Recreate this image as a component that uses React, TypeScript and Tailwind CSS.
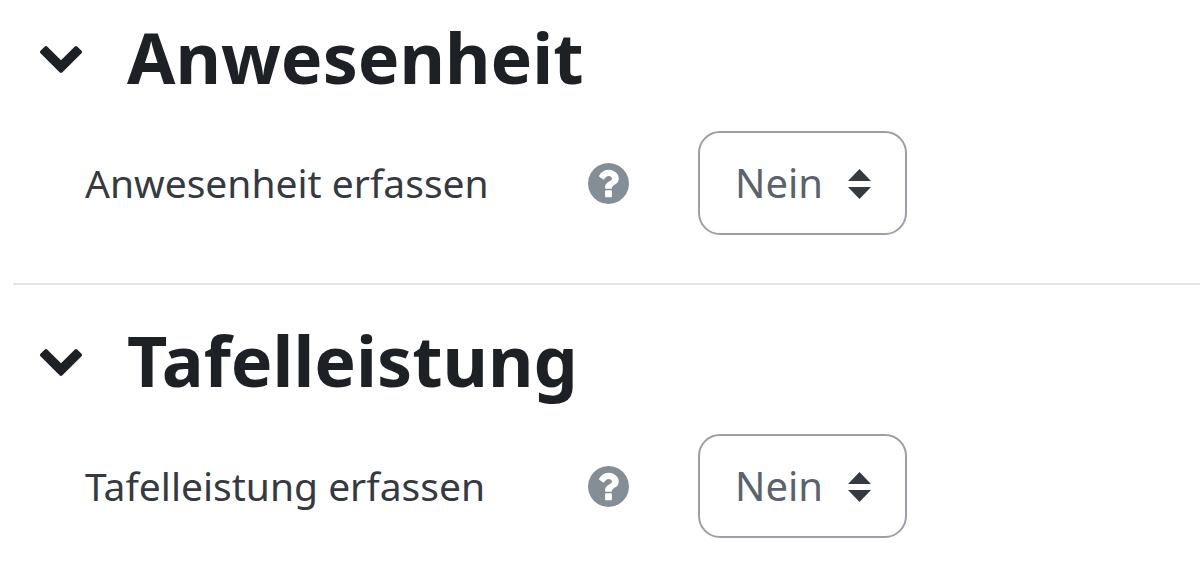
import { useState } from 'react'

interface SectionProps {
  id: string
  title: string
  label: string
}

function ChevronIcon() {
  return (
    <svg viewBox="90 532 1612 1036" className="h-[27px] w-[42px]" fill="currentColor" aria-hidden="true">
      <path d="M1683 808l-742 741q-19 19-45 19t-45-19l-742-741q-19-19-19-45.5t19-45.5l166-165q19-19 45-19t45 19l531 531 531-531q19-19 45-19t45 19l166 165q19 19 19 45.5t-19 45.5z" />
    </svg>
  )
}

function HelpIcon() {
  return (
    <svg viewBox="128 128 1536 1536" className="size-[41px]" fill="currentColor" aria-hidden="true">
      <path d="M1024 1376v-192q0-14-9-23t-23-9h-192q-14 0-23 9t-9 23v192q0 14 9 23t23 9h192q14 0 23-9t9-23zm256-672q0-88-55.5-163t-138.5-116-170-41q-243 0-371 213-15 24 8 42l132 100q7 6 19 6 16 0 25-12 53-68 86-92 34-24 86-24 48 0 85.5 26t37.5 59q0 38-20 61t-68 45q-63 28-115.5 86.5t-52.5 125.5v36q0 14 9 23t23 9h192q14 0 23-9t9-23q0-19 21.5-49.5t54.5-49.5q32-18 49-28.5t46-35 44.5-48 28-60.5 12.5-81zm384 192q0 209-103 385.5t-279.5 279.5-385.5 103-385.5-103-279.5-279.5-103-385.5 103-385.5 279.5-279.5 385.5-103 385.5 103 279.5 279.5 103 385.5z" />
    </svg>
  )
}

function Section({ id, title, label }: SectionProps) {
  const [open, setOpen] = useState(true)
  const [value, setValue] = useState('0')

  return (
    <section className="pl-[27px]">
      <div className="flex items-center gap-[45px]">
        <button
          type="button"
          aria-label={title}
          aria-expanded={open}
          onClick={() => setOpen((prev) => !prev)}
          className="text-[#1d2125]"
        >
          <ChevronIcon />
        </button>
        <h3 className="pb-1 text-[70px] leading-[88px] font-bold text-[#1d2125]">{title}</h3>
      </div>

      {open && (
        <div className="mt-[26px] flex items-center pl-[45px]">
          <div className="flex w-[544px] items-center justify-between">
            <label htmlFor={id} className="text-[39px] leading-[60px] text-[#343a40]">{label}</label>
            <button type="button" aria-label={`Hilfe zu ${label}`} className="text-[#848e96]">
              <HelpIcon />
            </button>
          </div>
          <div className="relative ml-[69px]">
            <select
              id={id}
              value={value}
              onChange={(e) => setValue(e.target.value)}
              className="h-[104px] w-[209px] appearance-none rounded-[22px] border-2 border-[#9a9fab] bg-white pl-[35px] text-[40px] text-[#5a636b]"
            >
              <option value="0">Nein</option>
              <option value="1">Ja</option>
            </select>
            <svg viewBox="0 0 4 5" preserveAspectRatio="none" className="pointer-events-none absolute top-[38px] right-9 h-[30px] w-[23px]" aria-hidden="true">
              <path fill="#343a40" d="M2 0L0 2h4zm0 5L0 3h4z" />
            </svg>
          </div>
        </div>
      )}
    </section>
  )
}

export default function App() {
  return (
    <main className="bg-white pt-[13px] pl-[13px] font-['Noto_Sans',sans-serif]">
      <Section id="attendance" title="Anwesenheit" label="Anwesenheit erfassen" />
      <hr className="mt-12 mb-[31px] border-t-2 border-[#e3e6e9]" />
      <Section id="board" title="Tafelleistung" label="Tafelleistung erfassen" />
    </main>
  )
}
